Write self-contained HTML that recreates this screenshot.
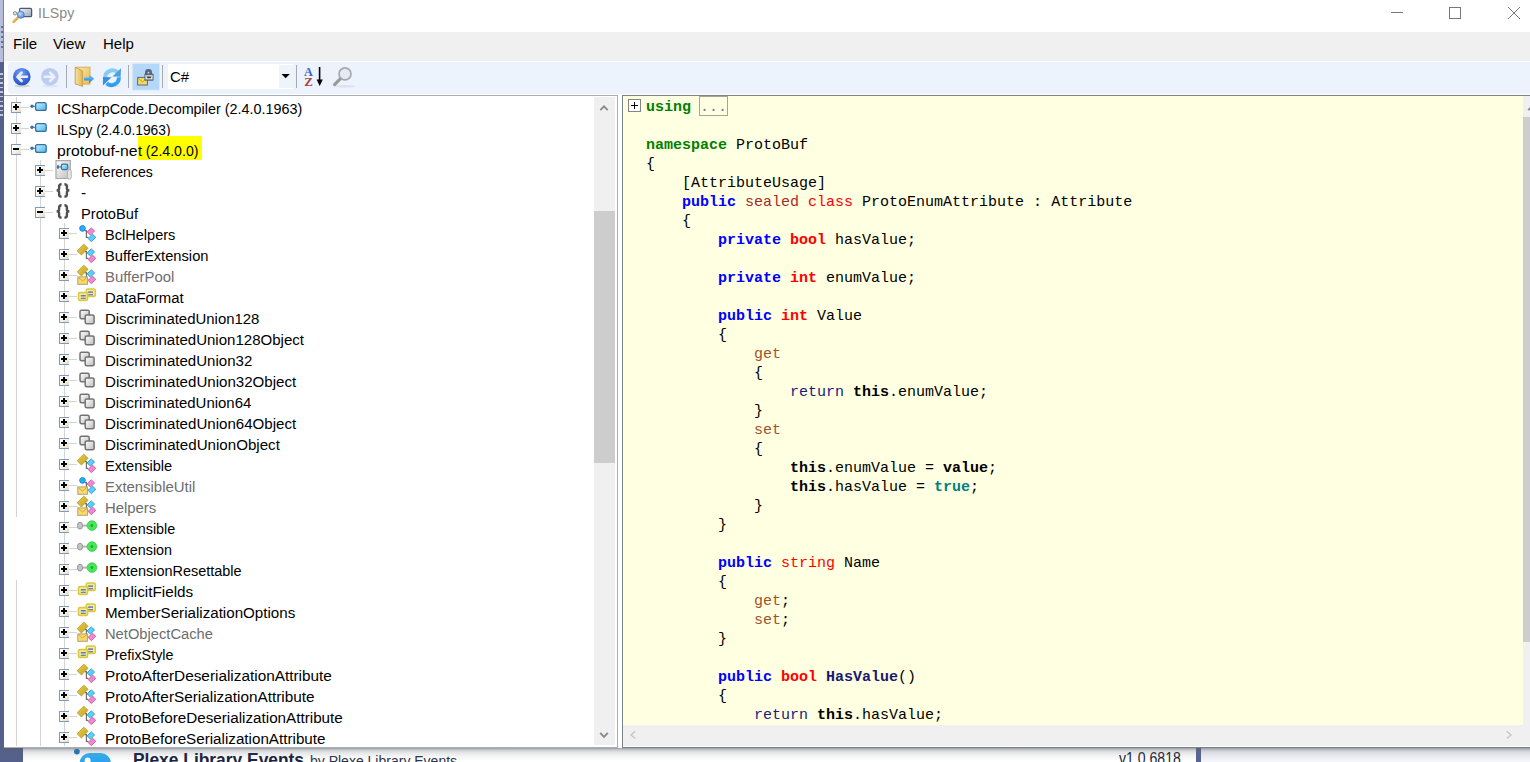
<!DOCTYPE html>
<html><head><meta charset="utf-8">
<style>
*{margin:0;padding:0;box-sizing:border-box}
html,body{width:1530px;height:762px;overflow:hidden;background:#f4f5fa;font-family:"Liberation Sans",sans-serif}
.a,.vl,.hl,.bx,.ic,.row,.sep{position:absolute}
#win{left:0;top:0;width:1530px;height:748px;background:#fff;overflow:hidden}
#title .t{left:38px;top:3px;font-size:15px;color:#8a8a8a;line-height:20px;transform:scaleX(.945);transform-origin:0 0}
#menu{left:4px;top:32px;width:1526px;height:29px;background:#f0f0f0}
#menu span{position:absolute;top:3px;font-size:15px;line-height:18px;color:#000}
#tb{left:8px;top:62px;width:1530px;height:32px;background:#edf3fc;border-radius:4px}
#tbline{left:4px;top:95px;width:614px;height:1px;background:#a9adb4}
#tbline2{left:622px;top:95px;width:908px;height:1px;background:#7c818a}
.sep{width:1px;height:23px;top:65px;background:#a6a9ae}
#treeb{left:617px;top:95px;width:1px;height:653px;background:#a9adb8}
#vs1{left:594px;top:97px;width:21px;height:648px;background:#f0f0f0}
#th1{left:594px;top:211px;width:21px;height:252px;background:#cdcdcd}
#codeb{left:622px;top:95px;width:1px;height:653px;background:#7c818a}
#code{left:623px;top:96px;width:900px;height:629px;background:#ffffe1;overflow:hidden}
#vs2{left:1523px;top:96px;width:20px;height:650px;background:#f0f0f0}
#th2{left:1523px;top:117px;width:20px;height:525px;background:#cdcdcd}
#hs{left:623px;top:725px;width:910px;height:21px;background:#f0f0f0}
#bgl{left:0;top:0;width:4px;height:762px;background:#56608c}
#bgl3{left:0;top:748px;width:23px;height:14px;background:#56608c}
#bgl2{left:0;top:0;width:3px;height:62px;background:#b6bedb;border-right:0}
#bgl2b{left:3px;top:0;width:1px;height:62px;background:#7a82a8}
#bgl4{left:0;top:73px;width:3px;height:46px;background:repeating-linear-gradient(#c4c6d6 0,#c4c6d6 1.5px,rgba(0,0,0,0) 1.5px,rgba(0,0,0,0) 4.6px)}
#bgapp{left:23px;top:748px;width:1173px;height:14px;background:#fff;overflow:hidden}
#bgbar{left:1196px;top:748px;width:5px;height:14px;background:#5a6494}
#shadow{left:4px;top:748px;width:1526px;height:14px;background:linear-gradient(rgba(90,95,105,.62) 0,rgba(90,95,105,.4) 1.5px,rgba(90,95,105,.24) 3px,rgba(90,95,105,.15) 5px,rgba(90,95,105,.07) 8px,rgba(90,95,105,0) 13px)}
pre{font-family:"Liberation Mono",monospace;font-size:15px;line-height:19px;position:absolute;left:23px;top:2px;color:#000}
.kg{color:#008000;font-weight:bold}
.kb{color:#0000ff;font-weight:bold}
.br{color:#a52a2a}
.rd{color:#ff0000}
.rb{color:#ff0000;font-weight:bold}
.gs{color:#a0522d}
.rt{color:#1a1a80}
.bk{font-weight:bold}
.tl{color:#008080;font-weight:bold}
.hv{color:#191970;font-weight:bold}
.row{height:21px;font-size:15.5px;line-height:21px;white-space:nowrap;color:#000;transform-origin:0 0}
.gray{color:#6d6d6d}
.hlbox{left:138px;top:136px;width:64px;height:24px;background:#ffff00}
.vl{width:1px;background:#d4d4d4}
.hl{width:8px;height:1px;background:#d4d4d4}
.bx{width:10px;height:11px;border:1px solid #7b9bbd;border-right:0;border-radius:1px 0 0 1px;background:linear-gradient(135deg,#fff 20%,#e4dccb)}
.bx i{position:absolute;background:#000}
.bx .h{left:1px;top:3px;width:6px;height:2px}
.bx .v{left:3px;top:1px;width:2px;height:6px}
.ic{overflow:visible}
</style></head><body>
<svg width="0" height="0" style="position:absolute">
<defs>
<linearGradient id="gblue" x1="0" y1="0" x2="1" y2="1"><stop offset="0" stop-color="#c8f0ff"/><stop offset="1" stop-color="#48b8f0"/></linearGradient>
<linearGradient id="ggray" x1="0" y1="0" x2="1" y2="1"><stop offset="0" stop-color="#ffffff"/><stop offset="1" stop-color="#bdbdbd"/></linearGradient>
<linearGradient id="ggold" x1="0" y1="0" x2="1" y2="1"><stop offset="0" stop-color="#ecd050"/><stop offset="1" stop-color="#c0a020"/></linearGradient>
<symbol id="i-asm" overflow="visible"><circle cx="4" cy="8.3" r="1.7" fill="#3a72a6"/><path d="M5 8.3H7.5" stroke="#3a72a6" stroke-width="1"/><rect x="7.6" y="4.6" width="10.6" height="7.8" rx="2" fill="url(#gblue)" stroke="#3a6e9e" stroke-width="1.3"/></symbol>
<symbol id="i-ref" overflow="visible"><path d="M4 -0.3H18.3V17.5H4Z" fill="url(#ggray)" stroke="#a8a8a8" stroke-width="1.2"/><rect x="15.6" y="8.6" width="3.6" height="9.6" rx="1.8" fill="#e8e8e8" stroke="#b0b0b0" stroke-width="1"/><ellipse cx="6" cy="5.9" rx="1.1" ry="2" fill="#3a72a6"/><path d="M6.5 5.9H9" stroke="#3a72a6"/><rect x="9.4" y="3.2" width="6.3" height="5.4" rx="1.5" fill="url(#gblue)" stroke="#3a6e9e" stroke-width="1.2"/></symbol>
<symbol id="i-ns" overflow="visible"><g fill="none" stroke="#505050" stroke-width="2.4"><path d="M9.6 2.3C7.6 2.3 7.1 3 7.1 4.6V6.6C7.1 7.9 6.3 8.4 4.6 8.4C6.3 8.4 7.1 9 7.1 10.3V12.4C7.1 13.9 7.6 14.6 9.6 14.6"/><path d="M12.4 2.3C14.4 2.3 14.9 3 14.9 4.6V6.6C14.9 7.9 15.7 8.4 17.4 8.4C15.7 8.4 14.9 9 14.9 10.3V12.4C14.9 13.9 14.4 14.6 12.4 14.6"/></g></symbol>
<symbol id="dia-pc" overflow="visible"><path d="M9 6.7H10.4V13.3H12.4" fill="none" stroke="#707070" stroke-width="1.2"/><path d="M15.3 3.9L18.6 7L14.3 11L11 7.8Z" fill="#f088d0" stroke="#c858a8" stroke-width=".9"/><path d="M16.5 10.1L19.8 13.3L15.3 17.6L12.1 14.5Z" fill="#58d0f8" stroke="#2898d0" stroke-width=".9"/></symbol>
<symbol id="dia-cp" overflow="visible"><path d="M9 6.7H10.4V13.3H12.4" fill="none" stroke="#707070" stroke-width="1.2"/><path d="M15.3 3.9L18.6 7L14.3 11L11 7.8Z" fill="#58d0f8" stroke="#2898d0" stroke-width=".9"/><path d="M16.5 10.1L19.8 13.3L15.3 17.6L12.1 14.5Z" fill="#f088d0" stroke="#c858a8" stroke-width=".9"/></symbol>
<symbol id="env" overflow="visible"><rect x="1.8" y="10.9" width="9.6" height="7.4" fill="#f9da6a" stroke="#b4a078" stroke-width="1"/><path d="M2.5 11.6L6.6 15L10.7 11.6" fill="none" stroke="#d0a838" stroke-width="1"/></symbol>
<symbol id="gold" overflow="visible"><path d="M1.1 5.8L7.8 -0.8L12.1 3.3L5.4 10Z" fill="url(#ggold)" stroke="#b89a20" stroke-width=".8"/></symbol>
<symbol id="bdot" overflow="visible"><circle cx="6.5" cy="4.4" r="2.8" fill="#22b0ff" stroke="#1e84d8" stroke-width="1"/></symbol>
<symbol id="i-static" overflow="visible"><use href="#dia-pc"/><use href="#bdot"/></symbol>
<symbol id="i-istatic" overflow="visible"><use href="#dia-pc"/><use href="#bdot"/><use href="#env"/></symbol>
<symbol id="i-class" overflow="visible"><use href="#dia-cp"/><use href="#gold"/></symbol>
<symbol id="i-iclass" overflow="visible"><use href="#dia-cp"/><use href="#gold"/><use href="#env"/></symbol>
<symbol id="i-enum" overflow="visible"><rect x="10.3" y="2" width="9" height="7.4" rx="1.5" fill="#f6ee98" stroke="#dcc840" stroke-width="1.6"/><rect x="12.1" y="4.5" width="4.9" height="1.2" fill="#3c5cc0"/><rect x="12.1" y="7.1" width="4.9" height="1.2" fill="#6078b8"/><rect x="2.5" y="5.6" width="9" height="7.8" rx="1.5" fill="#f6ee98" stroke="#dcc840" stroke-width="1.6"/><rect x="4.8" y="8.2" width="5" height="1.2" fill="#3c5cc0"/><rect x="4.8" y="10.7" width="5" height="1.2" fill="#6078b8"/></symbol>
<symbol id="i-struct" overflow="visible"><rect x="4" y="2.2" width="9.2" height="8.5" rx="1.5" fill="url(#ggray)" stroke="#737373" stroke-width="1.5"/><rect x="9.2" y="7.1" width="8.9" height="8.7" rx="1.5" fill="url(#ggray)" stroke="#737373" stroke-width="1.5"/></symbol>
<symbol id="i-iface" overflow="visible"><rect x="6.5" y="6.6" width="4.5" height="2" fill="#b4b4b4"/><ellipse cx="4" cy="7.7" rx="2.6" ry="3.4" fill="#c4c4c4" stroke="#989898" stroke-width="1"/><circle cx="15.9" cy="7.6" r="4.8" fill="#46e656" stroke="#38c848" stroke-width=".8"/><circle cx="15.9" cy="7.6" r="1.3" fill="#12a828"/></symbol>
</defs></svg>
<div class="a" id="win">
 <div class="a" id="title"><span class="a t">ILSpy</span><svg class="a" style="left:0;top:0" width="40" height="32" viewBox="0 0 40 32">
  <defs><linearGradient id="gmon" x1="0" y1="0" x2="1" y2="1"><stop offset="0" stop-color="#f2f4f8"/><stop offset="1" stop-color="#98a6bc"/></linearGradient>
  <radialGradient id="glens" cx=".4" cy=".35" r=".7"><stop offset="0" stop-color="#c8e4ff"/><stop offset="1" stop-color="#3a7ee0"/></radialGradient></defs>
  <rect x="19.6" y="8.3" width="12" height="8.3" rx="1.2" fill="url(#gmon)" stroke="#4a5a72" stroke-width="1.3"/>
  <path d="M17.4 18.2L13.6 22" stroke="#e0a020" stroke-width="2.4" stroke-linecap="round"/>
  <path d="M17.4 18.2L13.6 22" stroke="#ffe070" stroke-width="1" stroke-dasharray="1 1"/>
  <circle cx="15" cy="13.3" r="1.7" fill="#e8e8e8" stroke="#7a8290" stroke-width=".9"/>
  <circle cx="20.8" cy="14.8" r="3.5" fill="url(#glens)" stroke="#5a7ab0" stroke-width=".8"/>
  <path d="M1391 12.5H1403" transform="translate(-1391 0)" stroke="none"/>
 </svg>
 <svg class="a" style="left:1380px;top:0" width="150" height="32" viewBox="1380 0 150 32">
  <path d="M1391 12.5H1403" stroke="#777" stroke-width="1"/>
  <rect x="1449.5" y="7.5" width="11" height="11" fill="none" stroke="#777" stroke-width="1"/>
  <path d="M1508 7L1520 19M1520 7L1508 19" stroke="#777" stroke-width="1"/>
 </svg>
</div>
 <div class="a" id="menu"><span style="left:9px">File</span><span style="left:49px">View</span><span style="left:99px">Help</span></div>
 <div class="a" id="tb"></div>
 <div class="a" id="tbline"></div><div class="a" id="tbline2"></div>

 <svg class="a" style="left:0;top:60px" width="360" height="36" viewBox="0 60 360 36">
  <defs>
   <radialGradient id="gback" cx=".45" cy=".3" r=".75"><stop offset="0" stop-color="#7aa6f4"/><stop offset=".6" stop-color="#3a68dc"/><stop offset="1" stop-color="#2448b4"/></radialGradient>
   <linearGradient id="gfold" x1="0" y1="0" x2="1" y2="1"><stop offset="0" stop-color="#fbe6a2"/><stop offset="1" stop-color="#e8bc60"/></linearGradient>
   <linearGradient id="gdoor" x1="0" y1="0" x2="1" y2="0"><stop offset="0" stop-color="#f8e6a0"/><stop offset="1" stop-color="#dcb45a"/></linearGradient>
   <linearGradient id="garr" x1="0" y1="0" x2="0" y2="1"><stop offset="0" stop-color="#68c8f8"/><stop offset="1" stop-color="#2a88d8"/></linearGradient>
  </defs>
  <ellipse cx="22" cy="86" rx="8" ry="1.5" fill="#000" opacity=".12"/>
  <circle cx="21.8" cy="76.8" r="8.8" fill="url(#gback)"/>
  <path d="M27 76.8H17.8M21.6 72.6L17.4 76.8L21.6 81" fill="none" stroke="#ececec" stroke-width="2.6" stroke-linecap="round" stroke-linejoin="round"/>
  <ellipse cx="50" cy="86" rx="8" ry="1.5" fill="#000" opacity=".05"/>
  <circle cx="49.9" cy="76.8" r="8.8" fill="#bccbf2"/>
  <path d="M44.7 76.8H53.9M50.1 72.6L54.3 76.8L50.1 81" fill="none" stroke="#eef0f6" stroke-width="2.6" stroke-linecap="round" stroke-linejoin="round"/>
  <rect x="66" y="65" width="1" height="23" fill="#a6a9ae"/>
  <rect x="75.6" y="67.2" width="14.4" height="16.9" fill="url(#gfold)" stroke="#d6ae5c" stroke-width="1"/>
  <path d="M75.2 67.4L82.4 70.8L82.6 86.5L75.2 83.8Z" fill="url(#gdoor)" stroke="#caa048" stroke-width=".9"/>
  <rect x="84.1" y="77.3" width="5.4" height="3.1" fill="url(#garr)"/>
  <path d="M89 74.4L94.2 78.7L89 83.2Z" fill="url(#garr)"/>
  <g fill="none" stroke-width="4" stroke-linecap="butt">
   <path d="M105.2 78.2A7.4 7.2 0 0 1 117.6 72.3" stroke="#86ccf4"/>
   <path d="M118.8 77.2A7.4 7.2 0 0 1 106.6 83.3" stroke="#30a4f0"/>
  </g>
  <path d="M121 68.3L120.7 76.8L112.4 76.4Z" fill="#4c9ee6"/>
  <path d="M102.9 85.6L103 77.1L111.6 77.2Z" fill="#3a8ee0"/>
  <ellipse cx="112" cy="86" rx="8" ry="1.2" fill="#000" opacity=".06"/>
  <rect x="128" y="65" width="1" height="23" fill="#a6a9ae"/>
  <rect x="132.3" y="63.4" width="27.2" height="26.7" fill="#b3d8fb" stroke="#dde8f2" stroke-width=".8"/>
  <path d="M146.3 75V72.6A2.2 2.2 0 0 1 150.7 72.6V75" fill="none" stroke="#56667a" stroke-width="2.6"/>
  <rect x="137.6" y="77.4" width="9.8" height="7.6" fill="#f8d860" stroke="#5e6a78" stroke-width="1"/>
  <path d="M138.2 78.2L142.5 82L146.8 78.2" fill="none" stroke="#b89a30" stroke-width=".9"/>
  <rect x="144.4" y="73.6" width="9.2" height="7.2" rx="1.2" fill="#56667a"/>
  <rect x="145.4" y="75.2" width="7.2" height="4.2" fill="#e6e6e6"/>
  <path d="M146.4 76.4H151.6L150.6 78.2H147.4Z" fill="#3a3a3a"/>
  <rect x="162" y="65" width="1" height="23" fill="#a6a9ae"/>
  <rect x="168" y="64" width="125" height="25" fill="#fff"/>
  <rect x="279" y="65" width="14" height="23" fill="#eef4fc"/>
  <path d="M281.5 74H289.8L285.65 78.2Z" fill="#000"/>
  <rect x="296" y="65" width="1" height="23" fill="#a6a9ae"/>
  <text x="304" y="75.8" font-family="Liberation Serif" font-weight="bold" font-size="12" fill="#3a66c0" textLength="8.8" lengthAdjust="spacingAndGlyphs">A</text>
  <text x="304.3" y="86" font-family="Liberation Serif" font-weight="bold" font-size="12" fill="#a84442" textLength="8.6" lengthAdjust="spacingAndGlyphs">Z</text>
  <path d="M319.6 67V82" stroke="#000" stroke-width="1.6"/>
  <path d="M316.6 79.6H322.8L319.7 85.9Z" fill="#000"/>
  <ellipse cx="345" cy="86.3" rx="10" ry="1.3" fill="#000" opacity=".07"/>
  <path d="M340.4 78.7L334.6 84.6" stroke="#9a9a9a" stroke-width="3.2" stroke-linecap="round"/>
  <circle cx="345" cy="73.9" r="6" fill="#e2ecf8" stroke="#a8a8a8" stroke-width="1.7"/>
 </svg>
 <span class="a" style="left:170px;top:68px;font-size:15px;line-height:18px;color:#000">C#</span>
 <div class="a" id="tree">
<div class="vl" style="left:16px;top:97px;height:420px"></div>
<div class="vl" style="left:16px;top:580px;height:166px"></div>
<div class="vl" style="left:40px;top:160px;height:586px"></div>
<div class="vl" style="left:64px;top:223px;height:523px"></div>
<div class="bx" style="left:11px;top:102px"><i class="h"></i><i class="v"></i></div>
<div class="hl" style="left:21px;top:107px"></div>
<svg class="ic" style="left:28px;top:98px" width="22" height="21"><use href="#i-asm"/></svg>
<div class="row" id="r0" style="left:57px;top:98px;transform:scaleX(0.9273)">ICSharpCode.Decompiler (2.4.0.1963)</div>
<div class="bx" style="left:11px;top:123px"><i class="h"></i><i class="v"></i></div>
<div class="hl" style="left:21px;top:128px"></div>
<svg class="ic" style="left:28px;top:119px" width="22" height="21"><use href="#i-asm"/></svg>
<div class="row" id="r1" style="left:57px;top:119px;transform:scaleX(0.8906)">ILSpy (2.4.0.1963)</div>
<div class="bx" style="left:11px;top:144px"><i class="h"></i></div>
<div class="hl" style="left:21px;top:149px"></div>
<svg class="ic" style="left:28px;top:140px" width="22" height="21"><use href="#i-asm"/></svg>
<div class="a hlbox"></div>
<div class="row" id="r2b" style="left:57px;top:140px;transform:scaleX(1.0160)">protobuf-ne</div>
<div class="row" id="r2c" style="left:138px;top:140px;transform:scaleX(0.9110)">t (2.4.0.0)</div>
<div class="bx" style="left:35px;top:165px"><i class="h"></i><i class="v"></i></div>
<div class="hl" style="left:45px;top:170px"></div>
<svg class="ic" style="left:52px;top:161px" width="22" height="21"><use href="#i-ref"/></svg>
<div class="row" id="r3" style="left:81px;top:161px;transform:scaleX(0.9051)">References</div>
<div class="bx" style="left:35px;top:186px"><i class="h"></i><i class="v"></i></div>
<div class="hl" style="left:45px;top:191px"></div>
<svg class="ic" style="left:52px;top:182px" width="22" height="21"><use href="#i-ns"/></svg>
<div class="row" id="r4" style="left:81px;top:182px">-</div>
<div class="bx" style="left:35px;top:207px"><i class="h"></i></div>
<div class="hl" style="left:45px;top:212px"></div>
<svg class="ic" style="left:52px;top:203px" width="22" height="21"><use href="#i-ns"/></svg>
<div class="row" id="r5" style="left:81px;top:203px;transform:scaleX(0.9443)">ProtoBuf</div>
<div class="bx" style="left:59px;top:228px"><i class="h"></i><i class="v"></i></div>
<div class="hl" style="left:69px;top:233px"></div>
<svg class="ic" style="left:76px;top:224px" width="22" height="21"><use href="#i-static"/></svg>
<div class="row" id="r6" style="left:105px;top:224px;transform:scaleX(0.9387)">BclHelpers</div>
<div class="bx" style="left:59px;top:249px"><i class="h"></i><i class="v"></i></div>
<div class="hl" style="left:69px;top:254px"></div>
<svg class="ic" style="left:76px;top:245px" width="22" height="21"><use href="#i-class"/></svg>
<div class="row" id="r7" style="left:105px;top:245px;transform:scaleX(0.9481)">BufferExtension</div>
<div class="bx" style="left:59px;top:270px"><i class="h"></i><i class="v"></i></div>
<div class="hl" style="left:69px;top:275px"></div>
<svg class="ic" style="left:76px;top:266px" width="22" height="21"><use href="#i-iclass"/></svg>
<div class="row gray" id="r8" style="left:105px;top:266px;transform:scaleX(0.9606)">BufferPool</div>
<div class="bx" style="left:59px;top:291px"><i class="h"></i><i class="v"></i></div>
<div class="hl" style="left:69px;top:296px"></div>
<svg class="ic" style="left:76px;top:287px" width="22" height="21"><use href="#i-enum"/></svg>
<div class="row" id="r9" style="left:105px;top:287px;transform:scaleX(0.9610)">DataFormat</div>
<div class="bx" style="left:59px;top:312px"><i class="h"></i><i class="v"></i></div>
<div class="hl" style="left:69px;top:317px"></div>
<svg class="ic" style="left:76px;top:308px" width="22" height="21"><use href="#i-struct"/></svg>
<div class="row" id="r10" style="left:105px;top:308px;transform:scaleX(0.9637)">DiscriminatedUnion128</div>
<div class="bx" style="left:59px;top:333px"><i class="h"></i><i class="v"></i></div>
<div class="hl" style="left:69px;top:338px"></div>
<svg class="ic" style="left:76px;top:329px" width="22" height="21"><use href="#i-struct"/></svg>
<div class="row" id="r11" style="left:105px;top:329px;transform:scaleX(0.9707)">DiscriminatedUnion128Object</div>
<div class="bx" style="left:59px;top:354px"><i class="h"></i><i class="v"></i></div>
<div class="hl" style="left:69px;top:359px"></div>
<svg class="ic" style="left:76px;top:350px" width="22" height="21"><use href="#i-struct"/></svg>
<div class="row" id="r12" style="left:105px;top:350px;transform:scaleX(0.9715)">DiscriminatedUnion32</div>
<div class="bx" style="left:59px;top:375px"><i class="h"></i><i class="v"></i></div>
<div class="hl" style="left:69px;top:380px"></div>
<svg class="ic" style="left:76px;top:371px" width="22" height="21"><use href="#i-struct"/></svg>
<div class="row" id="r13" style="left:105px;top:371px;transform:scaleX(0.9735)">DiscriminatedUnion32Object</div>
<div class="bx" style="left:59px;top:396px"><i class="h"></i><i class="v"></i></div>
<div class="hl" style="left:69px;top:401px"></div>
<svg class="ic" style="left:76px;top:392px" width="22" height="21"><use href="#i-struct"/></svg>
<div class="row" id="r14" style="left:105px;top:392px;transform:scaleX(0.9651)">DiscriminatedUnion64</div>
<div class="bx" style="left:59px;top:417px"><i class="h"></i><i class="v"></i></div>
<div class="hl" style="left:69px;top:422px"></div>
<svg class="ic" style="left:76px;top:413px" width="22" height="21"><use href="#i-struct"/></svg>
<div class="row" id="r15" style="left:105px;top:413px;transform:scaleX(0.9735)">DiscriminatedUnion64Object</div>
<div class="bx" style="left:59px;top:438px"><i class="h"></i><i class="v"></i></div>
<div class="hl" style="left:69px;top:443px"></div>
<svg class="ic" style="left:76px;top:434px" width="22" height="21"><use href="#i-struct"/></svg>
<div class="row" id="r16" style="left:105px;top:434px;transform:scaleX(0.9760)">DiscriminatedUnionObject</div>
<div class="bx" style="left:59px;top:459px"><i class="h"></i><i class="v"></i></div>
<div class="hl" style="left:69px;top:464px"></div>
<svg class="ic" style="left:76px;top:455px" width="22" height="21"><use href="#i-class"/></svg>
<div class="row" id="r17" style="left:105px;top:455px;transform:scaleX(0.9394)">Extensible</div>
<div class="bx" style="left:59px;top:480px"><i class="h"></i><i class="v"></i></div>
<div class="hl" style="left:69px;top:485px"></div>
<svg class="ic" style="left:76px;top:476px" width="22" height="21"><use href="#i-istatic"/></svg>
<div class="row gray" id="r18" style="left:105px;top:476px;transform:scaleX(0.9613)">ExtensibleUtil</div>
<div class="bx" style="left:59px;top:501px"><i class="h"></i><i class="v"></i></div>
<div class="hl" style="left:69px;top:506px"></div>
<svg class="ic" style="left:76px;top:497px" width="22" height="21"><use href="#i-iclass"/></svg>
<div class="row gray" id="r19" style="left:105px;top:497px;transform:scaleX(0.9585)">Helpers</div>
<div class="bx" style="left:59px;top:522px"><i class="h"></i><i class="v"></i></div>
<div class="hl" style="left:69px;top:527px"></div>
<svg class="ic" style="left:76px;top:518px" width="22" height="21"><use href="#i-iface"/></svg>
<div class="row" id="r20" style="left:105px;top:518px;transform:scaleX(0.9263)">IExtensible</div>
<div class="bx" style="left:59px;top:543px"><i class="h"></i><i class="v"></i></div>
<div class="hl" style="left:69px;top:548px"></div>
<svg class="ic" style="left:76px;top:539px" width="22" height="21"><use href="#i-iface"/></svg>
<div class="row" id="r21" style="left:105px;top:539px;transform:scaleX(0.9264)">IExtension</div>
<div class="bx" style="left:59px;top:564px"><i class="h"></i><i class="v"></i></div>
<div class="hl" style="left:69px;top:569px"></div>
<svg class="ic" style="left:76px;top:560px" width="22" height="21"><use href="#i-iface"/></svg>
<div class="row" id="r22" style="left:105px;top:560px;transform:scaleX(0.9322)">IExtensionResettable</div>
<div class="bx" style="left:59px;top:585px"><i class="h"></i><i class="v"></i></div>
<div class="hl" style="left:69px;top:590px"></div>
<svg class="ic" style="left:76px;top:581px" width="22" height="21"><use href="#i-enum"/></svg>
<div class="row" id="r23" style="left:105px;top:581px;transform:scaleX(0.9843)">ImplicitFields</div>
<div class="bx" style="left:59px;top:606px"><i class="h"></i><i class="v"></i></div>
<div class="hl" style="left:69px;top:611px"></div>
<svg class="ic" style="left:76px;top:602px" width="22" height="21"><use href="#i-enum"/></svg>
<div class="row" id="r24" style="left:105px;top:602px;transform:scaleX(0.9773)">MemberSerializationOptions</div>
<div class="bx" style="left:59px;top:627px"><i class="h"></i><i class="v"></i></div>
<div class="hl" style="left:69px;top:632px"></div>
<svg class="ic" style="left:76px;top:623px" width="22" height="21"><use href="#i-iclass"/></svg>
<div class="row gray" id="r25" style="left:105px;top:623px;transform:scaleX(0.9487)">NetObjectCache</div>
<div class="bx" style="left:59px;top:648px"><i class="h"></i><i class="v"></i></div>
<div class="hl" style="left:69px;top:653px"></div>
<svg class="ic" style="left:76px;top:644px" width="22" height="21"><use href="#i-enum"/></svg>
<div class="row" id="r26" style="left:105px;top:644px;transform:scaleX(0.9243)">PrefixStyle</div>
<div class="bx" style="left:59px;top:669px"><i class="h"></i><i class="v"></i></div>
<div class="hl" style="left:69px;top:674px"></div>
<svg class="ic" style="left:76px;top:665px" width="22" height="21"><use href="#i-class"/></svg>
<div class="row" id="r27" style="left:105px;top:665px;transform:scaleX(0.9900)">ProtoAfterDeserializationAttribute</div>
<div class="bx" style="left:59px;top:690px"><i class="h"></i><i class="v"></i></div>
<div class="hl" style="left:69px;top:695px"></div>
<svg class="ic" style="left:76px;top:686px" width="22" height="21"><use href="#i-class"/></svg>
<div class="row" id="r28" style="left:105px;top:686px;transform:scaleX(0.9887)">ProtoAfterSerializationAttribute</div>
<div class="bx" style="left:59px;top:711px"><i class="h"></i><i class="v"></i></div>
<div class="hl" style="left:69px;top:716px"></div>
<svg class="ic" style="left:76px;top:707px" width="22" height="21"><use href="#i-class"/></svg>
<div class="row" id="r29" style="left:105px;top:707px;transform:scaleX(0.9822)">ProtoBeforeDeserializationAttribute</div>
<div class="bx" style="left:59px;top:732px"><i class="h"></i><i class="v"></i></div>
<div class="hl" style="left:69px;top:737px"></div>
<svg class="ic" style="left:76px;top:728px" width="22" height="21"><use href="#i-class"/></svg>
<div class="row" id="r30" style="left:105px;top:728px;transform:scaleX(0.9804)">ProtoBeforeSerializationAttribute</div> </div>
 <div class="a" id="treeb"></div>
 <div class="a" id="vs1"></div><div class="a" id="th1"></div>
 <div class="a" id="codeb"></div>
 <div class="a" id="code"><div class="a" style="left:5px;top:3px;width:13px;height:13px;border:1px solid #848484;background:#fff"><i class="a" style="left:2px;top:5px;width:7px;height:1px;background:#000"></i><i class="a" style="left:5px;top:2px;width:1px;height:7px;background:#000"></i></div><div class="a" style="left:76px;top:0;width:29px;height:20px;border:1.5px solid #a4a4a4"></div><pre><span class="kg">using</span> <span style="color:#7a7a8a">...</span>

<span class="kg">namespace</span> ProtoBuf
{
    [AttributeUsage]
    <span class="kb">public</span> <span class="br">sealed</span> <span class="rd">class</span> ProtoEnumAttribute : Attribute
    {
        <span class="kb">private</span> <span class="rb">bool</span> hasValue;

        <span class="kb">private</span> <span class="rb">int</span> enumValue;

        <span class="kb">public</span> <span class="rb">int</span> Value
        {
            <span class="gs">get</span>
            {
                <span class="rt">return</span> <span class="bk">this</span>.enumValue;
            }
            <span class="gs">set</span>
            {
                <span class="bk">this</span>.enumValue = <span class="bk">value</span>;
                <span class="bk">this</span>.hasValue = <span class="tl">true</span>;
            }
        }

        <span class="kb">public</span> <span class="rd">string</span> Name
        {
            <span class="gs">get</span>;
            <span class="gs">set</span>;
        }

        <span class="kb">public</span> <span class="rb">bool</span> <span class="hv">HasValue</span>()
        {
            <span class="rt">return</span> <span class="bk">this</span>.hasValue;
</pre></div>
 <div class="a" id="vs2"></div><div class="a" id="th2"></div>
 <div class="a" id="hs"></div>
 <div class="a" style="left:4px;top:747px;width:614px;height:1px;background:#a9adb4"></div>
 <div class="a" style="left:622px;top:747px;width:908px;height:1px;background:#7c818a"></div>
 <svg class="a" style="left:590px;top:96px" width="940" height="652" viewBox="590 96 940 652">
  <path d="M600.3 110.2L604 106.4L607.7 110.2" fill="none" stroke="#8a8a8a" stroke-width="1.9"/>
  <path d="M600.2 732.8L604 736.8L607.8 732.8" fill="none" stroke="#8a8a8a" stroke-width="1.9"/>
  <path d="M635.2 731.2L631 734.9L635.2 738.6" fill="none" stroke="#c4c4c4" stroke-width="1.3"/>
  <path d="M1506.8 731.2L1511 734.9L1506.8 738.6" fill="none" stroke="#c4c4c4" stroke-width="1.3"/>
  <path d="M1528.2 110.2L1531.9 106.4L1535.6 110.2" fill="none" stroke="#8a8a8a" stroke-width="1.9"/>
  
 </svg>
</div>
<div class="a" id="bgl"></div><div class="a" id="bgl2"></div><div class="a" id="bgl2b"></div><div class="a" id="bgl4"></div><div class="a" style="left:1px;top:26px;width:2px;height:2px;border-radius:1px;background:#4c5480"></div><div class="a" style="left:1px;top:31px;width:2px;height:2px;border-radius:1px;background:#4c5480"></div><div class="a" style="left:1px;top:36px;width:2px;height:2px;border-radius:1px;background:#4c5480"></div><div class="a" style="left:1px;top:41px;width:2px;height:2px;border-radius:1px;background:#4c5480"></div><div class="a" style="left:1px;top:46px;width:2px;height:2px;border-radius:1px;background:#4c5480"></div><div class="a" id="bgl3"></div>
<div class="a" id="bgapp"><svg class="a" style="left:0;top:0" width="120" height="15" viewBox="23 748 120 15">
  <defs><linearGradient id="gpl" x1="0" y1="0" x2="0" y2="1"><stop offset="0" stop-color="#38b4f4"/><stop offset="1" stop-color="#0c8ee0"/></linearGradient></defs>
  <circle cx="76.9" cy="751.6" r="2.9" fill="#1a7cc4"/>
  <rect x="79.7" y="753" width="31.1" height="22" rx="10" fill="url(#gpl)"/>
  <circle cx="87.6" cy="760.6" r="3" fill="#fff"/>
 </svg>
 <span class="a" style="left:110px;top:3px;font-size:19px;line-height:18px;font-weight:bold;color:#1a2340;white-space:nowrap;transform:scaleX(.915);transform-origin:0 0">Plexe Library Events</span>
 <span class="a" style="left:287px;top:4px;font-size:14px;line-height:18px;color:#2c3448;white-space:nowrap">by Plexe Library Events</span>
 <span class="a" style="left:1096px;top:2px;font-size:16px;line-height:18px;color:#1e2438;white-space:nowrap;transform:scaleX(.88);transform-origin:0 0">v1.0.6818</span>
</div><div class="a" id="bgbar"></div>
<div class="a" id="shadow"></div>
</body></html>
